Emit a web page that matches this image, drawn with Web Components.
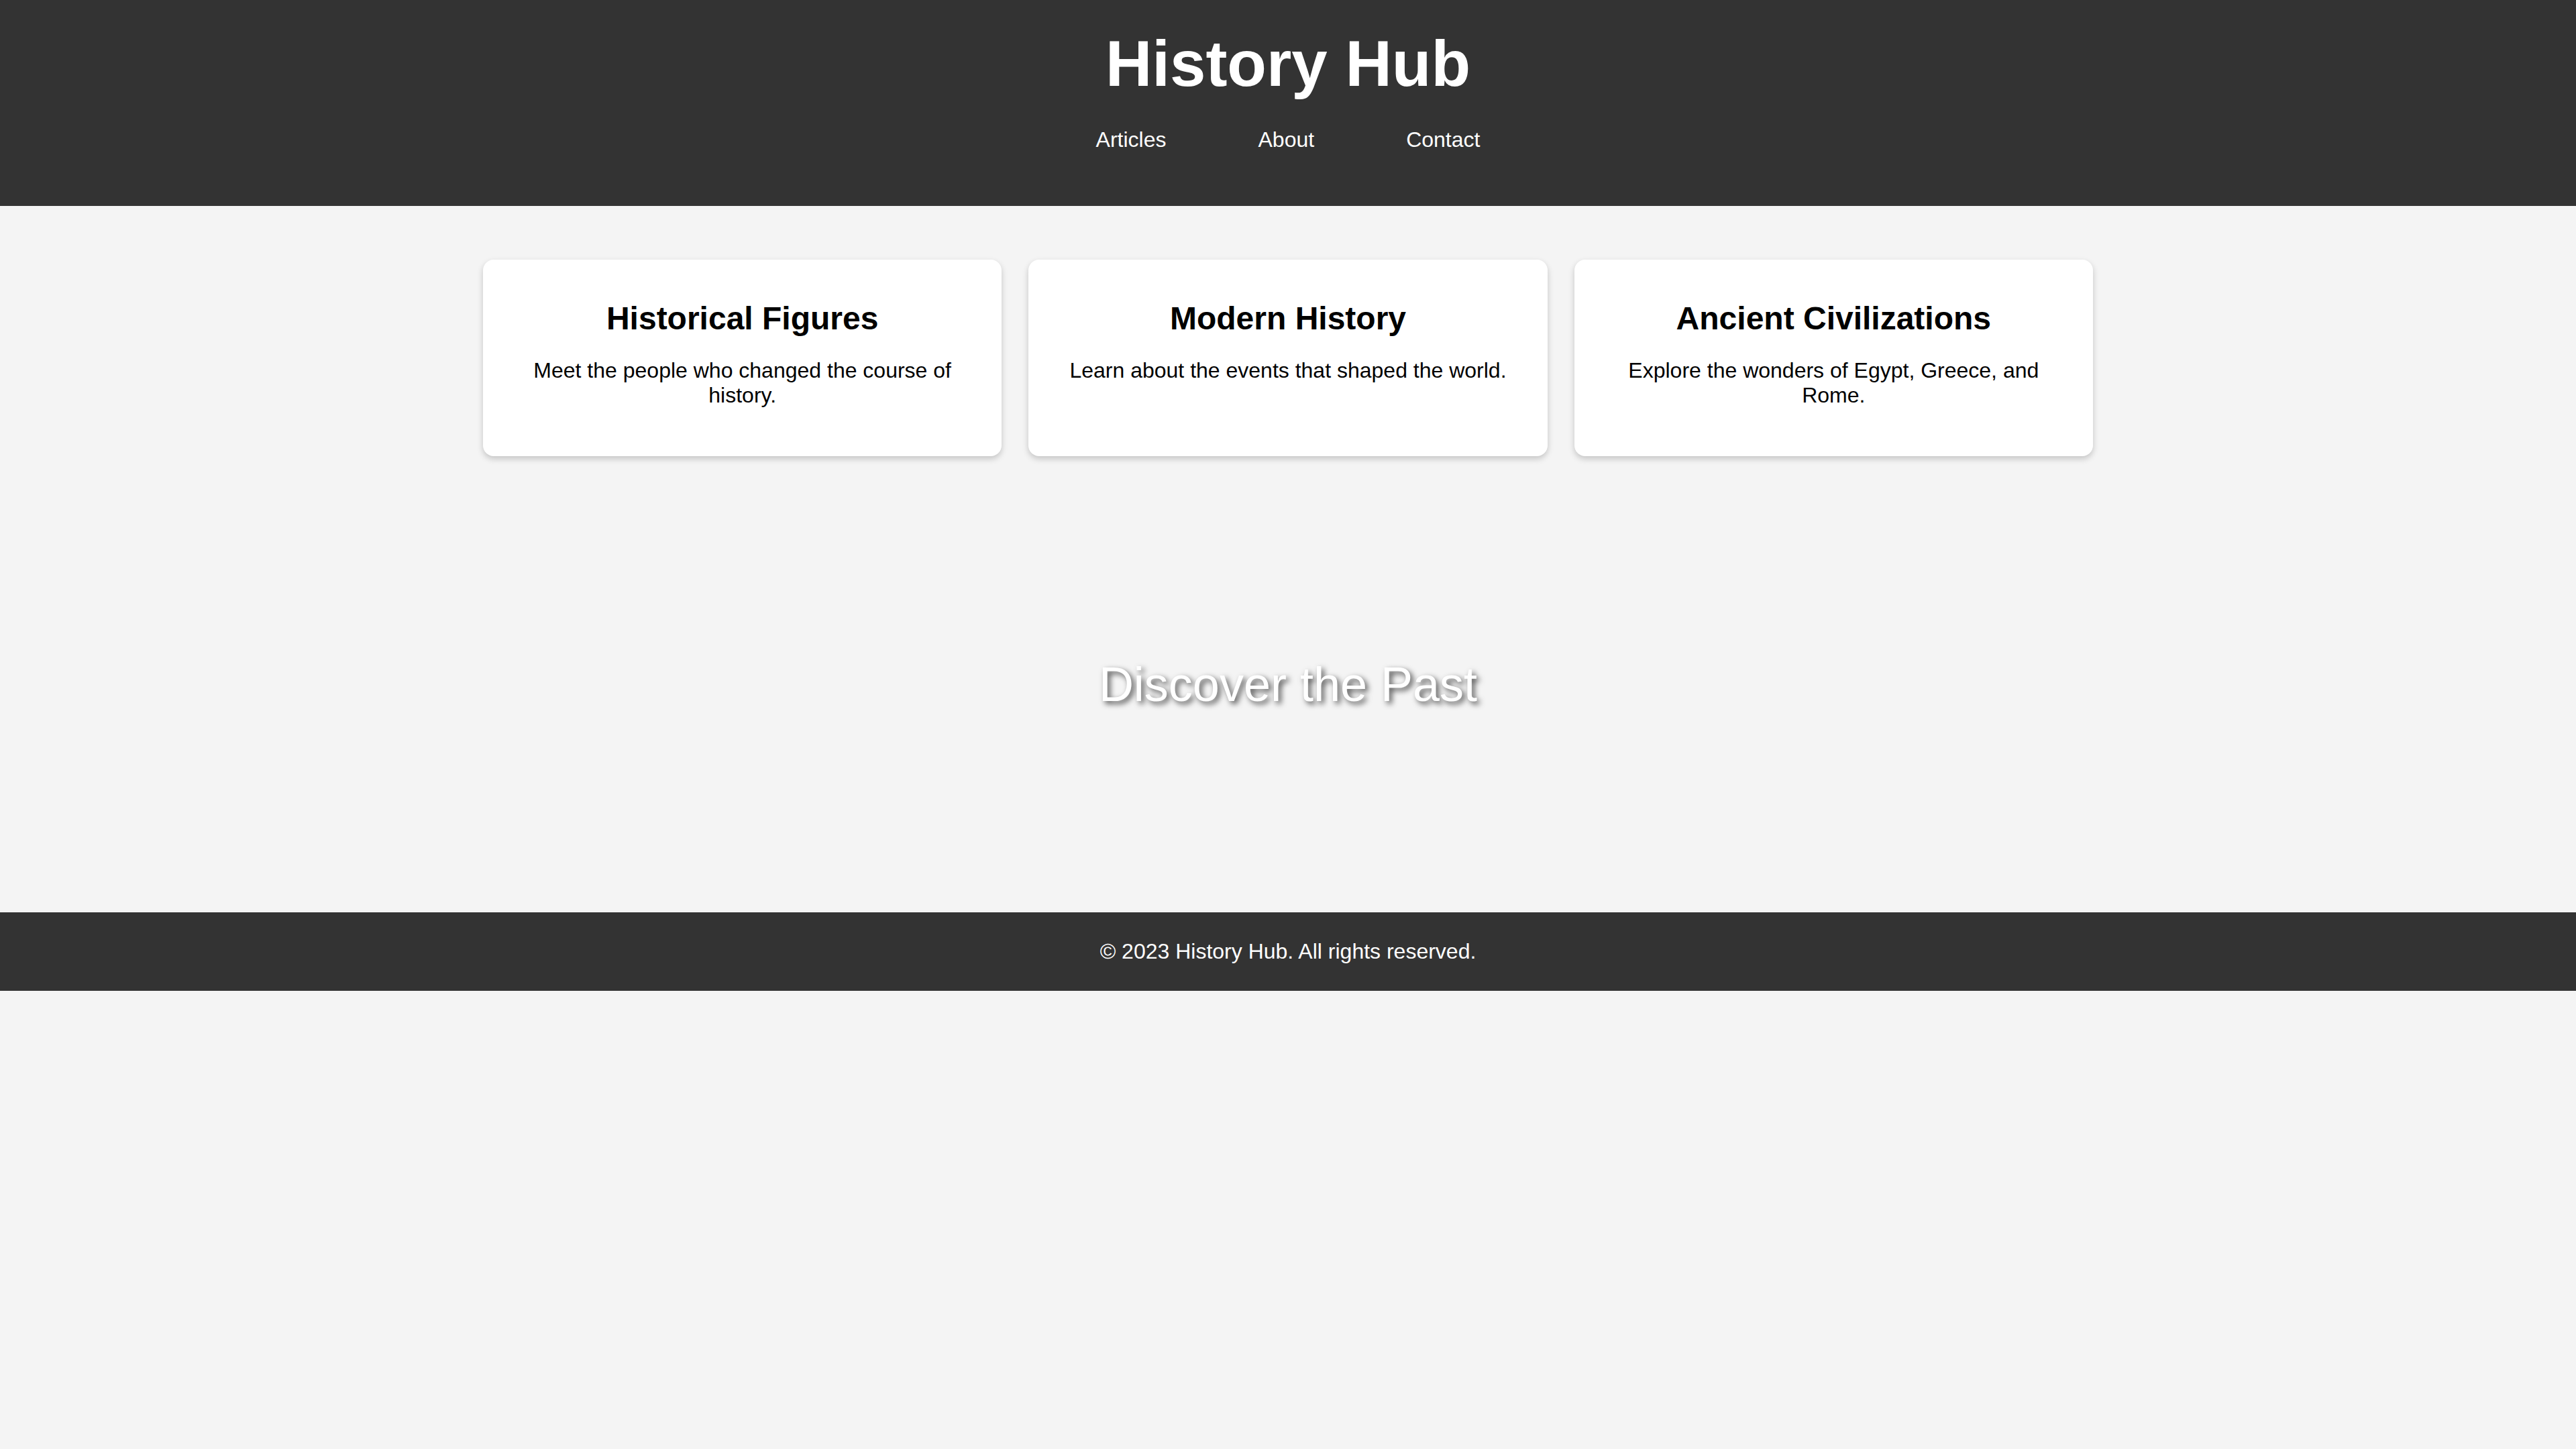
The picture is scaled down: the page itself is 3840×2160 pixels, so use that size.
<!DOCTYPE html>
<html lang="en">
<head>
<meta charset="utf-8">
<meta name="viewport" content="width=device-width, initial-scale=1">
<title>History Hub</title>
<style>
  body {
    margin: 0;
    background: #f4f4f4;
    color: #000;
    font: 32px/37px "Liberation Sans", Arial, sans-serif;
  }
</style>
</head>
<body>
<history-page>
  <site-header slot="header">
    History Hub
    <nav-link slot="nav" href="#articles">Articles</nav-link>
    <nav-link slot="nav" href="#about">About</nav-link>
    <nav-link slot="nav" href="#contact">Contact</nav-link>
  </site-header>
  <card-grid>
    <article-card>
      <span slot="title">Historical Figures</span>
      Meet the people who changed the course of history.
    </article-card>
    <article-card>
      <span slot="title">Modern History</span>
      Learn about the events that shaped the world.
    </article-card>
    <article-card>
      <span slot="title">Ancient Civilizations</span>
      Explore the wonders of Egypt, Greece, and Rome.
    </article-card>
  </card-grid>
  <hero-banner>Discover the Past</hero-banner>
  <site-footer slot="footer">© 2023 History Hub. All rights reserved.</site-footer>
</history-page>

<script>
  function define(name, html, setup) {
    const template = document.createElement("template");
    template.innerHTML = html;
    customElements.define(name, class extends HTMLElement {
      constructor() {
        super();
        this.attachShadow({ mode: "open" }).append(template.content.cloneNode(true));
      }
      connectedCallback() {
        if (setup) setup(this);
      }
    });
  }

  define("history-page", `
    <style>:host, main { display: flex; flex-direction: column; }</style>
    <slot name="header"></slot>
    <main><slot></slot></main>
    <slot name="footer"></slot>`);

  define("site-header", `
    <style>
      :host { display: block; }
      header { background: #333; color: #fff; padding: 40px; text-align: center; }
      h1 { margin: 0; font-size: 96px; line-height: 110px; }
      nav { display: flex; justify-content: center; gap: 137px; margin: 40px 0; }
    </style>
    <header>
      <h1><slot></slot></h1>
      <nav aria-label="Main"><slot name="nav"></slot></nav>
    </header>`);

  define("nav-link", `
    <style>
      :host { display: block; }
      a { color: inherit; text-decoration: none; }
      a:hover { text-decoration: underline; }
    </style>
    <a><slot></slot></a>`,
    el => { el.shadowRoot.querySelector("a").href = el.getAttribute("href"); });

  define("card-grid", `
    <style>
      :host { display: block; }
      section {
        display: grid;
        grid-template-columns: repeat(auto-fit, minmax(500px, 1fr));
        gap: 40px;
        max-width: 2400px;
        margin: 0 auto;
        padding: 80px 40px 40px;
      }
    </style>
    <section><slot></slot></section>`);

  define("article-card", `
    <style>
      :host { display: grid; }
      article {
        padding: 40px;
        background: #fff;
        border-radius: 16px;
        box-shadow: 0 4px 10px rgba(0, 0, 0, 0.2);
        text-align: center;
      }
      h2 { margin: 20px 0 32px; font-size: 48px; line-height: 55px; }
      p { margin: 32px 0; }
    </style>
    <article>
      <h2><slot name="title"></slot></h2>
      <p><slot></slot></p>
    </article>`);

  define("hero-banner", `
    <style>
      :host { display: block; }
      section {
        display: flex;
        align-items: center;
        justify-content: center;
        min-height: 600px;
        margin-bottom: 40px;
      }
      p {
        margin: 0;
        color: #fff;
        font-size: 72px;
        line-height: 82px;
        text-align: center;
        text-shadow: 4px 4px 8px rgba(0, 0, 0, 0.7);
      }
    </style>
    <section><p><slot></slot></p></section>`);

  define("site-footer", `
    <style>
      :host { display: block; }
      footer { padding: 40px; background: #333; color: #fff; text-align: center; }
    </style>
    <footer><slot></slot></footer>`);
</script>
</body>
</html>
